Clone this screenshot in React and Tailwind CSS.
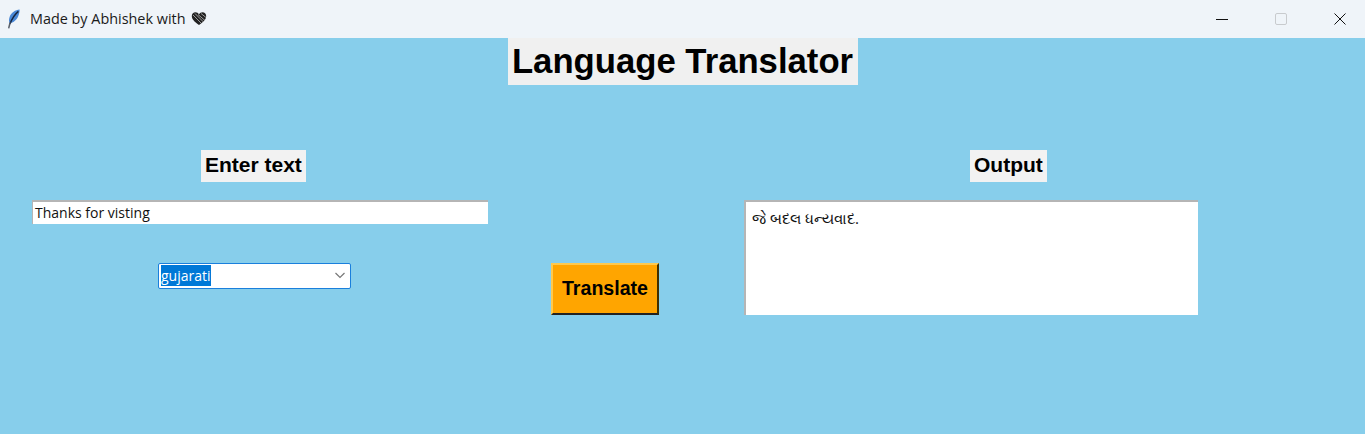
const uiFont = "font-['Open_Sans','Noto_Sans',sans-serif]";
const boldFont = "font-['Liberation_Sans',Arial,sans-serif] font-bold";

const Feather = () => (
  <svg width="14" height="20" viewBox="0 0 14 20">
    <path d="M12.6 .6 C8.4 1 4.2 3.6 2.6 8 C1.8 10.2 1.8 12.4 2.6 14.4 C6.2 13.8 9.6 11 11.2 7.2 C12.2 5 12.7 2.6 12.6 .6 Z" fill="#4a88d6" />
    <path d="M11.4 2.4 C8.2 5 5.2 9 3 15" fill="none" stroke="#16243f" strokeWidth="1.4" />
    <path d="M3 14 L1.8 18.8" stroke="#59606b" strokeWidth="1.5" strokeLinecap="round" />
  </svg>
);

const Heart = () => (
  <svg width="16" height="15" viewBox="0 0 16 15">
    <path d="M8 14 C3 10.5 .8 8 .8 5 C.8 2.8 2.5 1.2 4.5 1.2 C6 1.2 7.2 2 8 3.2 C8.8 2 10 1.2 11.5 1.2 C13.5 1.2 15.2 2.8 15.2 5 C15.2 8 13 10.5 8 14 Z" fill="#222" />
    <path d="M2 4 L10 12 M4 2.5 L12.5 11 M7 3.5 L14 9.5 M10 2.5 L15 6.5" stroke="#bbb" strokeWidth=".8" />
  </svg>
);

const TitleBar = () => (
  <div className="flex h-[38px] items-center bg-[#eff4f9]">
    <div className="ml-[7px] w-[23px]"><Feather /></div>
    <span className={`${uiFont} flex items-center gap-[6px] text-[14.4px] text-[#1a1a1a]`}>
      Made by Abhishek with <Heart />
    </span>
    <div className="ml-auto flex items-center gap-[47px] pr-[19px]">
      <svg width="12" height="12" viewBox="0 0 12 12"><path d="M0 6.5h12" stroke="#111" strokeWidth="1" /></svg>
      <svg width="12" height="12" viewBox="0 0 12 12"><rect x=".5" y=".5" width="11" height="11" rx="1.5" fill="none" stroke="#c8cbce" /></svg>
      <svg width="12" height="12" viewBox="0 0 12 12"><path d="M.5.5l11 11M11.5.5l-11 11" stroke="#111" strokeWidth="1" /></svg>
    </div>
  </div>
);

const Label = ({ children, className }) => (
  <div className={`${boldFont} flex h-[32px] items-center self-start bg-[#f2f2f2] px-[4px] pb-[2px] text-[21px] text-black ${className}`}>
    {children}
  </div>
);

export default function App() {
  return (
    <div className="h-[434px] w-[1365px] overflow-hidden bg-[#87ceeb]">
      <TitleBar />
      <div className="flex justify-center">
        <h1 className={`${boldFont} flex h-[47px] w-[350px] items-center justify-center bg-[#f0f0f0] pb-[1px] text-[34.7px] text-black`}>
          Language Translator
        </h1>
      </div>
      <div className="flex items-start pl-[33px] pt-[65px]">
        <div className="flex w-[455px] flex-col">
          <Label className="ml-[168px]">Enter text</Label>
          <div className={`${uiFont} -ml-[1px] mt-[18px] flex h-[24px] items-center border-t-2 border-l border-[#b5b5b5] bg-white pb-[1px] pl-[2px] text-[14px] text-[#111]`}>
            Thanks for visting
          </div>
          <div className={`${uiFont} ml-[125px] mt-[39px] flex h-[26px] w-[193px] items-center justify-between rounded-[2px] border border-[#1a7fdc] bg-white pb-[1px] pl-[2px] pr-[5px] text-[14px]`}>
            <span className="bg-[#0078d7] text-white">gujarati</span>
            <svg width="10" height="7" viewBox="0 0 10 7"><path d="M.5 1l4.5 4.5L9.5 1" fill="none" stroke="#777" strokeWidth="1.2" /></svg>
          </div>
        </div>
        <button className={`${boldFont} ml-[63px] mt-[113px] h-[52px] w-[108px] border-2 border-t-[#ffc94d] border-l-[#ffc94d] border-r-[#3f3000] border-b-[#222] bg-[#ffa500] text-[19.6px] text-black`}>
          Translate
        </button>
        <div className="ml-[86px] flex w-[453px] flex-col">
          <Label className="ml-[225px]">Output</Label>
          <div className={`${uiFont} -ml-[1px] mt-[18px] h-[115px] border-t-2 border-l-2 border-[#b5b5b5] bg-white pl-[6px] pt-[5px] text-[15.2px] text-[#111]`}>
            જે બદલ ધન્યવાદ.
          </div>
        </div>
      </div>
    </div>
  );
}
